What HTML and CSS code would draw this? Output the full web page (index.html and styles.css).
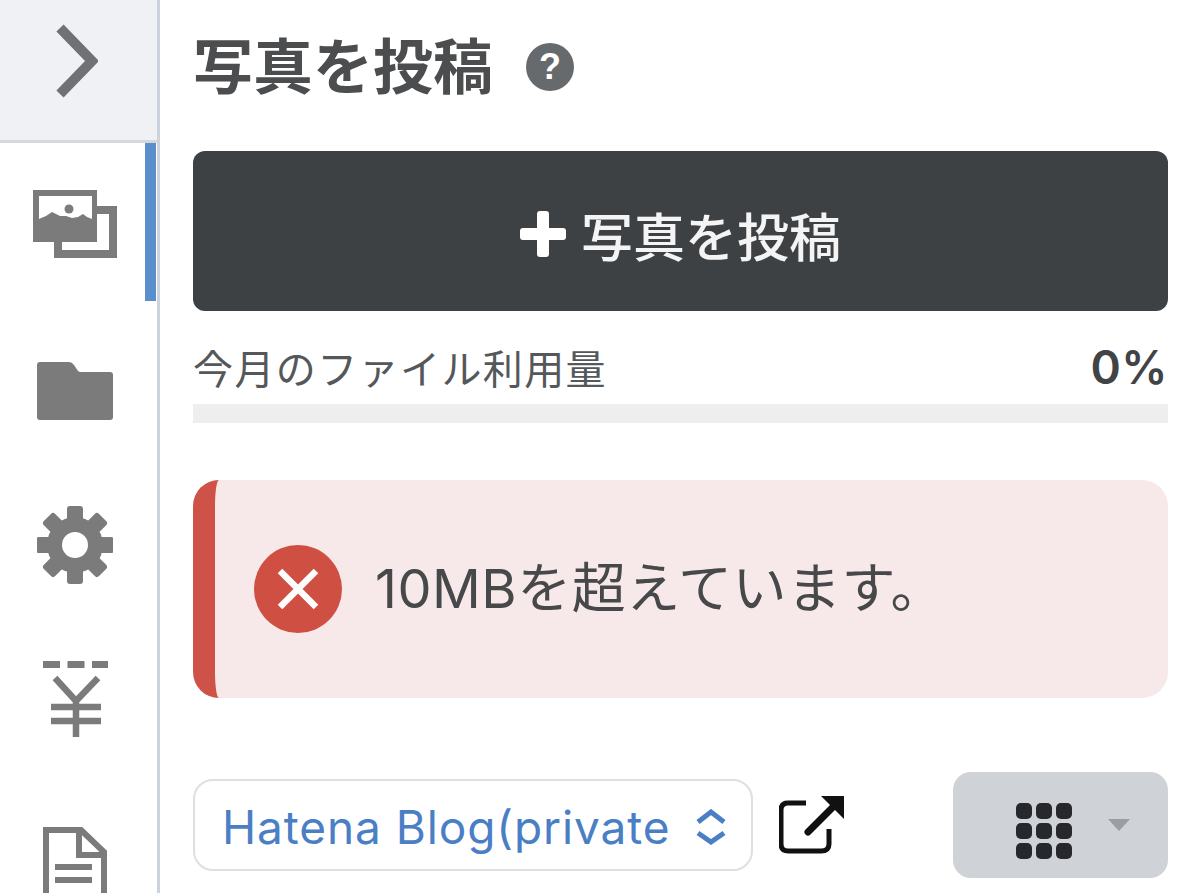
FILE: index.html
```html
<!DOCTYPE html>
<html lang="ja">
<head>
    <meta charset="UTF-8">
    <meta name="viewport" content="width=device-width, initial-scale=1.0">
    <title>写真を投稿</title>
    <link rel="stylesheet" href="styles.css">
</head>
<body>
    <div class="page">
        <div class="sidebar">
            <div class="toggle">
                <svg width="44" height="76" viewBox="0 0 44 76"><path d="M6 5 L38 38 L6 71" fill="none" stroke="#6f7174" stroke-width="10"/></svg>
            </div>
            <div class="nav-item nav-photos active">
                <svg width="84" height="68" viewBox="0 0 84 68">
                    <path d="M25 50 V64 H80 V20 H62" fill="none" stroke="#7b7b7b" stroke-width="8"/>
                    <rect x="0" y="0" width="64" height="52" fill="#7b7b7b"/>
                    <path d="M6 6 H59 V29 L54 27 L50 24 L45 27 L39 28 L33 26 L27 26 L19 22 L13 26 L6 29 Z" fill="#fff"/>
                    <circle cx="36" cy="19" r="4.500" fill="#7b7b7b"/>
                </svg>
            </div>
            <div class="nav-item nav-folder">
                <svg width="76" height="58" viewBox="0 0 76 58"><path d="M3 0 H32 Q35 0 37 3 L41 9 Q42 10 44 10 H73 Q76 10 76 13 V55 Q76 58 73 58 H3 Q0 58 0 55 V3 Q0 0 3 0 Z" fill="#7b7b7b"/></svg>
            </div>
            <div class="nav-item nav-gear">
                <svg width="76" height="78" viewBox="0 0 76 78">
                    <g fill="#7b7b7b">
                        <rect x="30" y="0" width="16" height="78" rx="3"/>
                        <rect x="30" y="0" width="16" height="78" rx="3" transform="rotate(45 38 39)"/>
                        <rect x="30" y="0" width="16" height="78" rx="3" transform="rotate(90 38 39)"/>
                        <rect x="30" y="0" width="16" height="78" rx="3" transform="rotate(135 38 39)"/>
                        <circle cx="38" cy="39" r="28"/>
                    </g>
                    <circle cx="38" cy="39" r="13" fill="#fff"/>
                </svg>
            </div>
            <div class="nav-item nav-yen">
                <svg width="66" height="78" viewBox="0 0 66 78">
                    <path d="M1 4.500 H66" fill="none" stroke="#7b7b7b" stroke-width="7" stroke-dasharray="17 7.500"/>
                    <path d="M13 18 L34 41 L56 18 M34 41 V77 M9 47 H59 M9 61 H59" fill="none" stroke="#7b7b7b" stroke-width="6.500"/>
                </svg>
            </div>
            <div class="nav-item nav-doc">
                <svg width="64" height="80" viewBox="0 0 64 80">
                    <path d="M3 80 V3 H38 L61 25 V80 M36 3 V28 H61 M12 40 H49 M12 53 H49" fill="none" stroke="#7b7b7b" stroke-width="6"/>
                </svg>
            </div>
        </div>

        <div class="main">
            <div class="title-row">
                <h1>写真を投稿</h1>
                <span class="help">?</span>
            </div>

            <button class="post-button" type="button">
                <svg width="46" height="46" viewBox="0 0 46 46"><path d="M17 3 Q17 0 20 0 H26 Q29 0 29 3 V17 H43 Q46 17 46 20 V26 Q46 29 43 29 H29 V43 Q29 46 26 46 H20 Q17 46 17 43 V29 H3 Q0 29 0 26 V20 Q0 17 3 17 H17 Z" fill="#fff"/></svg>
                写真を投稿
            </button>

            <div class="usage-row">
                <span class="usage-label">今月のファイル利用量</span>
                <strong>0%</strong>
            </div>
            <div class="usage-bar"></div>

            <div class="alert">
                <span class="alert-icon">
                    <svg width="44" height="44" viewBox="0 0 44 44"><path d="M4 4 L40 40 M40 4 L4 40" fill="none" stroke="#fff" stroke-width="6.500"/></svg>
                </span>
                <span class="alert-text">10MBを超えています。</span>
            </div>

            <div class="toolbar">
                <div class="blog-select">
                    <span class="blog-name">Hatena Blog(private</span>
                    <svg width="32" height="36" viewBox="0 0 32 36"><path d="M3 13 L16 3 L29 13 M3 24 L16 33 L29 24" fill="none" stroke="#4a7fc5" stroke-width="5"/></svg>
                </div>
                <svg class="open-link" width="66" height="58" viewBox="0 0 66 58">
                    <path d="M27 7 H9 Q2 7 2 14 V48 Q2 55 9 55 H42 Q50 55 50 48 V33" fill="none" stroke="#111" stroke-width="5"/>
                    <path d="M29 36 L54 11" fill="none" stroke="#111" stroke-width="7" stroke-linecap="round"/>
                    <path d="M42 0 H65 V23 Z" fill="#111"/>
                </svg>
                <button class="view-button" type="button">
                    <span class="grid-icon">
                        <i></i><i></i><i></i><i></i><i></i><i></i><i></i><i></i><i></i>
                    </span>
                    <span class="caret"></span>
                </button>
            </div>
        </div>
    </div>
</body>
</html>
```

FILE: styles.css
```css
body {
    margin: 0;
    background-color: white;
    font-family: Inter, "Noto Sans CJK JP", sans-serif;
}

.page {
    display: flex;
    height: 893px;
    overflow: hidden;
}

/* サイドバー */
.sidebar {
    width: 157px;
    flex-shrink: 0;
    border-right: 3px solid #ccd3dc;
}

.toggle {
    display: flex;
    align-items: center;
    justify-content: flex-end;
    box-sizing: border-box;
    height: 143px;
    padding-right: 59px;
    padding-bottom: 19px;
    background-color: #eff1f4;
    border-bottom: 3px solid #d5d7da;
}

.nav-item {
    position: relative;
    display: flex;
    justify-content: center;
    box-sizing: border-box;
    height: 158px;
    padding-right: 7px;
}

.nav-item.active::after {
    content: "";
    position: absolute;
    top: 0;
    right: 1px;
    width: 11px;
    height: 100%;
    background-color: #5b8fcb;
}

.nav-photos { padding-top: 47px; }
.nav-folder { padding-top: 61px; }
.nav-gear { padding-top: 47px; }
.nav-yen { padding-top: 43px; }
.nav-doc { padding-top: 52px; }

/* メイン */
.main {
    flex: 1;
    padding: 32px 32px 0 33px;
}

.title-row {
    display: flex;
    align-items: center;
    gap: 33px;
    height: 70px;
    margin-bottom: 49px;
}

h1 {
    margin: 0;
    font-size: 60px;
    font-weight: 700;
    line-height: 70px;
    color: #4b4d4f;
}

.help {
    width: 48px;
    height: 48px;
    border-radius: 50%;
    background-color: #676a6d;
    color: white;
    font-family: "Liberation Sans", sans-serif;
    font-size: 36px;
    font-weight: bold;
    line-height: 48px;
    text-align: center;
}

.post-button {
    display: flex;
    align-items: center;
    justify-content: center;
    gap: 15px;
    box-sizing: border-box;
    width: 100%;
    height: 160px;
    padding: 6px 0 0;
    background-color: #3e4144;
    color: #f4f4f4;
    border: none;
    border-radius: 12px;
    font-family: inherit;
    font-size: 52px;
    font-weight: 500;
}

.usage-row {
    display: flex;
    justify-content: space-between;
    align-items: center;
    box-sizing: border-box;
    height: 60px;
    margin-top: 29px;
    padding-bottom: 7px;
    color: #55585a;
}

.usage-label {
    font-size: 40px;
    letter-spacing: 1.400px;
}

.usage-row strong {
    font-size: 46px;
    font-weight: 600;
    letter-spacing: 0.500px;
    color: #414345;
}

.usage-bar {
    height: 19px;
    margin-top: 4px;
    background-color: #eeeeee;
}

.alert {
    display: flex;
    align-items: center;
    gap: 33px;
    box-sizing: border-box;
    height: 218px;
    margin-top: 57px;
    padding-left: 39px;
    background-color: #f7e9ea;
    border-left: 22px solid #cf5249;
    border-radius: 26px;
}

.alert-icon {
    display: flex;
    align-items: center;
    justify-content: center;
    width: 88px;
    height: 88px;
    border-radius: 50%;
    background-color: #cf5043;
}

.alert-text {
    padding-bottom: 10px;
    font-size: 54px;
    letter-spacing: 0.500px;
    color: #46484a;
}

.toolbar {
    display: flex;
    align-items: center;
    height: 106px;
    margin-top: 74px;
}

.blog-select {
    display: flex;
    align-items: center;
    justify-content: space-between;
    box-sizing: border-box;
    width: 560px;
    height: 92px;
    padding: 4px 24px 0 27px;
    background-color: white;
    border: 2px solid #dddfe2;
    border-radius: 20px;
    color: #4a7fc5;
    font-size: 46px;
    letter-spacing: 0.900px;
}

.blog-name {
    white-space: nowrap;
}

.open-link {
    margin-left: 26px;
}

.view-button {
    display: flex;
    align-items: center;
    justify-content: flex-start;
    width: 215px;
    height: 106px;
    margin-left: auto;
    padding: 0 0 0 63px;
    background-color: #cfd2d7;
    border: none;
    border-radius: 18px;
}

.grid-icon {
    display: grid;
    grid-template-columns: repeat(3, 16px);
    grid-auto-rows: 16px;
    gap: 4px;
    margin-top: 12px;
}

.grid-icon i {
    background-color: #26282b;
    border-radius: 5px;
}

.caret {
    width: 0;
    height: 0;
    margin-left: 36px;
    border-left: 11px solid transparent;
    border-right: 11px solid transparent;
    border-top: 12px solid #9a9da1;
}
```
